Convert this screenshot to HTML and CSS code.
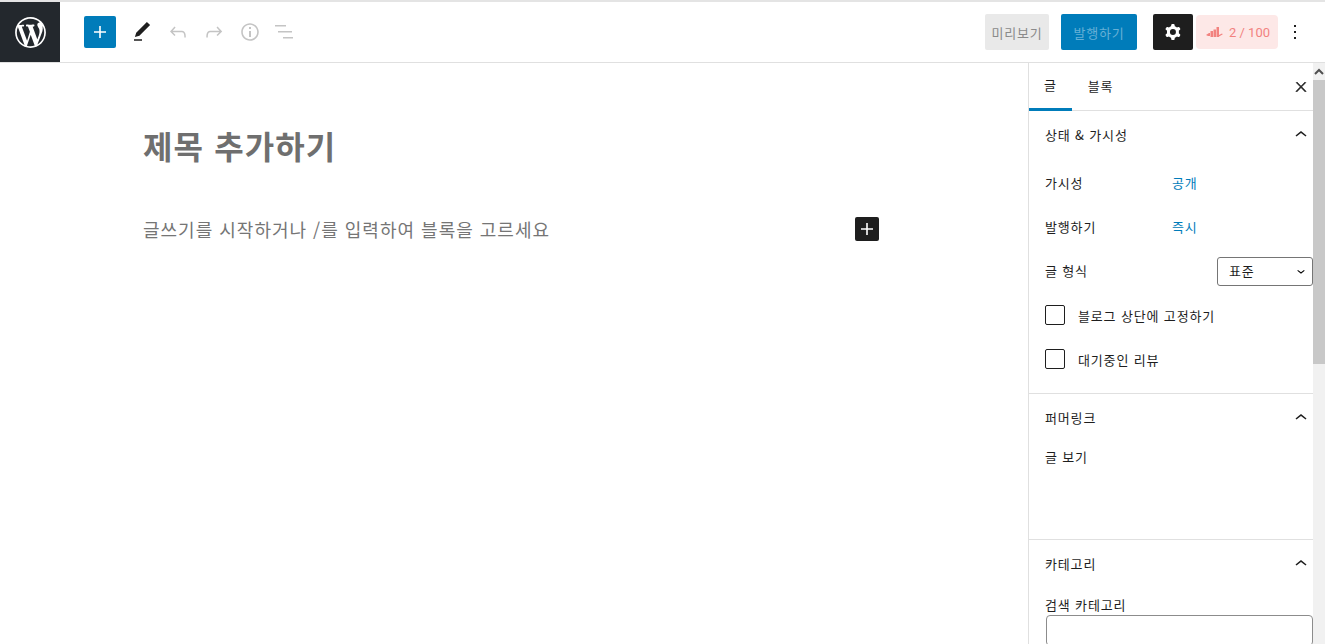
FILE: index.html
```html
<!DOCTYPE html>
<html lang="ko">
<head>
<meta charset="utf-8">
<title>글 편집</title>
<link rel="stylesheet" href="styles.css">
</head>
<body>
<div class="app">
  <header class="topbar">
    <div class="logo">
      <svg viewBox="-2 -2 24 24" width="37" height="37"><path fill="#fff" d="M20 10c0-5.51-4.49-10-10-10C4.48 0 0 4.49 0 10c0 5.52 4.48 10 10 10 5.51 0 10-4.48 10-10zM7.78 15.37L4.37 6.22c.55-.02 1.17-.08 1.17-.08.5-.06.44-1.13-.06-1.11 0 0-1.45.11-2.37.11-.18 0-.37 0-.58-.01C4.12 2.69 6.87 1.11 10 1.11c2.33 0 4.45.87 6.05 2.34-.68-.11-1.65.39-1.65 1.58 0 .74.45 1.36.9 2.1.35.61.55 1.36.55 2.46 0 1.49-1.4 5-1.4 5l-3.03-8.37c.54-.02.82-.17.82-.17.5-.05.44-1.25-.06-1.22 0 0-1.44.12-2.38.12-.87 0-2.33-.12-2.33-.12-.5-.03-.56 1.2-.06 1.22l.92.08 1.26 3.41zM17.41 10c.24-.64.74-1.87.43-4.25.7 1.29 1.05 2.71 1.05 4.25 0 3.29-1.73 6.24-4.4 7.78.97-2.59 1.94-5.2 2.92-7.78zM6.1 18.09C3.12 16.65 1.11 13.53 1.11 10c0-1.3.23-2.48.72-3.59C3.25 10.3 4.67 14.2 6.1 18.09zm4.03-6.63l2.58 6.98c-.86.29-1.76.45-2.71.45-.79 0-1.57-.11-2.29-.33.81-2.38 1.62-4.74 2.42-7.1z"/></svg>
    </div>
    <div class="tools">
      <button class="add-btn"><svg viewBox="0 0 24 24" width="24" height="24"><path fill="#fff" d="M18 11.2h-5.2V6h-1.6v5.2H6v1.6h5.2V18h1.6v-5.2H18z"/></svg></button>
      <span class="tool"><svg viewBox="0 0 24 24" width="24" height="24"><path fill="#1e1e1e" d="M20.1 5.1L16.9 2 6.2 12.7l-1.3 4.4 4.5-1.3L20.1 5.1zM4 20.8h8v-1.5H4v1.5z"/></svg></span>
      <span class="tool off"><svg viewBox="0 0 24 24" width="24" height="24"><path d="M18.3 11.7c-.6-.6-1.4-.9-2.3-.9H6.7l2.9-3.3-1.1-1-4.5 5L8.5 16l1-1-2.7-2.7H16c.5 0 .9.2 1.3.5 1 1 1 3.4 1 4.5v.3h1.5v-.2c0-1.5 0-4.3-1.5-5.7z"/></svg></span>
      <span class="tool off"><svg viewBox="0 0 24 24" width="24" height="24"><path d="M15.6 6.5l-1.1 1 2.9 3.3H8c-.9 0-1.7.3-2.3.9-1.4 1.5-1.4 4.2-1.4 5.6v.2h1.5v-.3c0-1.1 0-3.5 1-4.5.3-.3.7-.5 1.3-.5h9.2L14.5 15l1.1 1.1 4.6-4.6-4.6-5z"/></svg></span>
      <span class="tool off"><svg viewBox="0 0 24 24" width="24" height="24"><path d="M12 3.2c-4.8 0-8.8 3.9-8.8 8.8 0 4.8 3.9 8.8 8.8 8.8 4.8 0 8.8-3.9 8.8-8.8 0-4.8-4-8.8-8.8-8.8zm0 16c-4 0-7.2-3.3-7.2-7.2C4.8 8 8 4.8 12 4.8s7.2 3.3 7.2 7.2c0 4-3.2 7.2-7.2 7.2zM11 17h2v-6h-2v6zm0-8h2V7h-2v2z"/></svg></span>
      <span class="tool off"><svg viewBox="0 0 24 24" width="24" height="24"><path d="M1 5h11v1.600H1zM4 11h14v1.600H4zM9 17h10v1.600H9z"/></svg></span>
    </div>
    <div class="actions">
      <button class="preview">미리보기</button>
      <button class="publish">발행하기</button>
      <button class="settings"><svg viewBox="0 0 24 24" width="24" height="24"><path fill="#fff" fill-rule="evenodd" d="M10.289 4.836A1 1 0 0111.275 4h1.306a1 1 0 01.987.836l.244 1.466c.787.26 1.503.679 2.108 1.218l1.393-.522a1 1 0 011.216.437l.653 1.13a1 1 0 01-.23 1.273l-1.148.944a6.025 6.025 0 010 2.435l1.149.946a1 1 0 01.23 1.272l-.653 1.13a1 1 0 01-1.216.437l-1.394-.522c-.605.54-1.32.958-2.108 1.218l-.244 1.466a1 1 0 01-.987.836h-1.306a1 1 0 01-.986-.836l-.244-1.466a5.995 5.995 0 01-2.108-1.218l-1.394.522a1 1 0 01-1.217-.436l-.653-1.131a1 1 0 01.23-1.272l1.149-.946a6.026 6.026 0 010-2.435l-1.148-.944a1 1 0 01-.23-1.272l.653-1.131a1 1 0 011.217-.437l1.393.522a5.994 5.994 0 012.108-1.218l.244-1.466zM14.929 12a3 3 0 11-6 0 3 3 0 016 0z"/></svg></button>
      <button class="rank">
        <svg viewBox="0 0 17 11" width="17" height="11"><path fill="#f2827f" d="M0 8l3-2h1v3H2zM4.500 4H7v6H4.500zM7.500 2.500H10V10H7.500zM10.500 0H13v8l3-1.500.8.7L13 9.500V10h-2.500z"/></svg>
        <span>2 / 100</span>
      </button>
      <span class="more"><svg viewBox="0 0 24 24" width="24" height="24"><path fill="#1e1e1e" d="M13 19h-2v-2h2v2zm0-6h-2v-2h2v2zm0-6h-2V5h2v2z"/></svg></span>
    </div>
  </header>
  <div class="workspace">
    <main class="editor">
      <h1 class="post-title">제목 추가하기</h1>
      <div class="para-row">
        <p class="placeholder">글쓰기를 시작하거나 /를 입력하여 블록을 고르세요</p>
        <button class="inline-add"><svg viewBox="0 0 24 24" width="24" height="24"><path fill="#fff" d="M18 11.2h-5.2V6h-1.6v5.2H6v1.6h5.2V18h1.6v-5.2H18z"/></svg></button>
      </div>
    </main>
    <aside class="sidebar">
      <div class="tabs">
        <span class="tab active">글</span>
        <span class="tab">블록</span>
        <span class="close"><svg viewBox="0 0 24 24" width="16" height="16"><path fill="#1e1e1e" stroke="#1e1e1e" stroke-width="1" d="M13 11.8l6.1-6.3-1-1-6.1 6.2-6.1-6.2-1 1 6.1 6.3-6.5 6.7 1 1 6.5-6.6 6.5 6.6 1-1z"/></svg></span>
      </div>
      <section class="panel panel-status">
        <div class="panel-head"><span>상태 &amp; 가시성</span><svg viewBox="0 0 24 24" width="24" height="24"><path d="M6.5 12.4L12 8l5.5 4.4-.9 1.2L12 10l-4.5 3.6-1-1.2z"/></svg></div>
        <div class="row field"><span class="key">가시성</span><span class="link">공개</span></div>
        <div class="row field"><span class="key">발행하기</span><span class="link">즉시</span></div>
        <div class="row row-between"><span class="format-label">글 형식</span>
          <span class="select"><span class="select-text">표준</span><svg viewBox="0 0 24 24" width="16" height="16"><path d="M17.5 11.6L12 16l-5.5-4.4.9-1.2L12 14l4.5-3.6 1 1.2z"/></svg></span>
        </div>
        <label class="row check"><input type="checkbox"><span>블로그 상단에 고정하기</span></label>
        <label class="row check"><input type="checkbox"><span>대기중인 리뷰</span></label>
      </section>
      <section class="panel panel-link">
        <div class="panel-head"><span>퍼머링크</span><svg viewBox="0 0 24 24" width="24" height="24"><path d="M6.5 12.4L12 8l5.5 4.4-.9 1.2L12 10l-4.5 3.6-1-1.2z"/></svg></div>
        <div class="view-post">글 보기</div>
      </section>
      <section class="panel panel-cat">
        <div class="panel-head"><span>카테고리</span><svg viewBox="0 0 24 24" width="24" height="24"><path d="M6.5 12.4L12 8l5.5 4.4-.9 1.2L12 10l-4.5 3.6-1-1.2z"/></svg></div>
        <div class="search-label">검색 카테고리</div>
        <div class="search-box"></div>
      </section>
    </aside>
    <div class="scrollbar">
      <div class="scroll-up"><svg viewBox="0 0 12 8" width="12" height="8"><path d="M2 6l4-4 4 4" fill="none" stroke="#505050" stroke-width="2"/></svg></div>
      <div class="scroll-thumb"></div>
    </div>
  </div>
</div>
</body>
</html>
```
FILE: styles.css
```css
* { box-sizing: border-box; }
html, body { margin: 0; height: 100%; overflow: hidden; background: #fff; }
body { font-family: "Noto Sans CJK KR", "Noto Sans", sans-serif; font-size: 13px; letter-spacing: .85px; color: #1e1e1e; }
button { font: inherit; letter-spacing: inherit; border: 0; padding: 0; margin: 0; cursor: pointer; }
svg { display: block; }

.app { display: flex; flex-direction: column; height: 644px; border-top: 2px solid #e4e4e4; }

.topbar { flex: 0 0 61px; display: flex; align-items: stretch; border-bottom: 1px solid #e0e0e0; }
.logo { width: 60px; background: #23282d; display: flex; align-items: center; justify-content: center; }
.tools { display: flex; align-items: center; padding-left: 24px; }
.add-btn { width: 32px; height: 32px; background: #007cba; border-radius: 2px; display: flex; align-items: center; justify-content: center; margin-right: 4px; }
.tool { width: 36px; height: 36px; display: flex; align-items: center; justify-content: center; }
.tool.off svg { fill: #c4c4c4; }
.tools .tool:nth-child(2) { margin-left: 4px; }

.actions { margin-left: auto; display: flex; align-items: center; }
.preview { width: 64px; height: 36px; background: #e9e9e9; color: #8a8a8a; border-radius: 2px; margin-right: 12px; }
.publish { width: 76px; height: 36px; background: #007cba; color: #66b0d6; border-radius: 2px; margin-right: 16px; }
.settings { width: 40px; height: 36px; background: #1e1e1e; border-radius: 2px; display: flex; align-items: center; justify-content: center; margin-right: 3px; }
.rank { width: 82px; height: 34px; background: #fde8e7; color: #f2827f; border-radius: 4px; display: flex; align-items: center; justify-content: center; gap: 6px; padding-left: 2px; font-family: "Roboto", sans-serif; font-size: 13px; letter-spacing: 0; }
.more { width: 34px; height: 36px; display: flex; align-items: center; justify-content: center; margin-right: 13px; }

.workspace { flex: 1; display: flex; min-height: 0; overflow: hidden; }

.editor { flex: 1; min-width: 0; padding: 58px 149px 0 143px; }
.post-title { margin: 0; font-size: 32px; line-height: 48px; font-weight: 700; letter-spacing: 1.1px; color: #6f6f6f; }
.para-row { margin-top: 44px; display: flex; align-items: center; justify-content: space-between; height: 32px; }
.placeholder { margin: 0; font-size: 18px; letter-spacing: 1px; color: #757575; line-height: 32px; }
.inline-add { width: 24px; height: 24px; background: #1e1e1e; border-radius: 2px; }

.sidebar { flex: 0 0 285px; border-left: 1px solid #e0e0e0; overflow: hidden; }
.tabs { height: 48px; display: flex; align-items: stretch; border-bottom: 1px solid #e0e0e0; }
.tab { width: 43px; display: flex; align-items: center; justify-content: center; padding-bottom: 2px; }
.tab + .tab { width: 57px; }
.tab.active { border-bottom: 3px solid #007cba; margin-bottom: -1px; }
.close { margin-left: auto; width: 24px; display: flex; align-items: center; justify-content: center; }

.panel { border-bottom: 1px solid #e0e0e0; padding: 0 0 0 16px; }
.panel-head { height: 48px; display: flex; align-items: center; justify-content: space-between; }
.panel-head span { padding-bottom: 2px; }
.panel-head svg { fill: #1e1e1e; }
.panel-status { height: 283px; }
.panel-status .panel-head { margin-bottom: 2px; }
.panel-link { height: 146px; }
.panel-cat { border-bottom: 0; }

.row { height: 44px; display: flex; align-items: center; }
.field { padding-bottom: 2px; }
.format-label { padding-bottom: 2px; }
.key { width: 127px; }
.link { color: #007cba; }
.row-between { justify-content: space-between; }
.select { width: 96px; height: 29px; border: 1px solid #757575; border-radius: 3px; display: flex; align-items: center; justify-content: space-between; padding: 0 3px 0 11px; }
.select-text { padding-bottom: 2px; }
.check { gap: 13px; }
.check input { appearance: none; width: 20px; height: 20px; margin: 0; border: 1px solid #1e1e1e; border-radius: 2px; background: #fff; }

.view-post { margin-top: 4px; line-height: 22px; }
.search-label { margin-top: 6px; line-height: 22px; }
.search-box { margin: -1px 0 0 1px; height: 31px; border: 1px solid #8c8c8c; border-radius: 4px; }

.scrollbar { flex: 0 0 12px; background: #f1f1f1; }
.scroll-up { height: 17px; display: flex; align-items: center; justify-content: center; }
.scroll-thumb { height: 284px; background: #c8c8c8; }
```
